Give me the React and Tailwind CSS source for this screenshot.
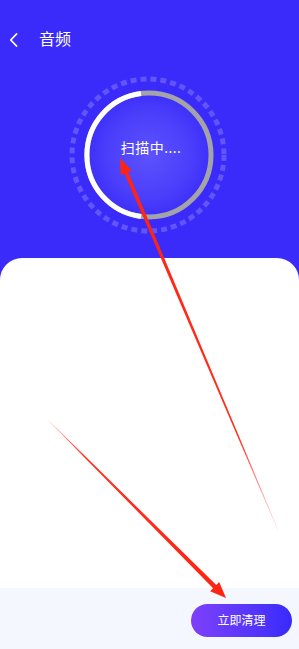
import React from "react";

const font = { fontFamily: '"Noto Sans", "Noto Sans CJK SC", sans-serif' };

function ScanRing() {
    // outer dashed ring + progress ring, drawn in a 160x160 box
    return (
        <svg width="160" height="160" viewBox="0 0 160 160" className="absolute inset-0">
            <defs>
                <radialGradient id="core" cx="50%" cy="50%" r="50%">
                    <stop offset="0%" stopColor="#5d52fd" />
                    <stop offset="70%" stopColor="#4a3efb" />
                    <stop offset="100%" stopColor="#3d2ffa" />
                </radialGradient>
            </defs>
            <circle cx="80" cy="80" r="76" fill="none" stroke="#ffffff" strokeOpacity="0.2" strokeWidth="5" strokeDasharray="6 4" />
            <circle cx="81" cy="80" r="62" fill="url(#core)" />
            <circle cx="81" cy="80" r="62" fill="none" stroke="#a3a3a8" strokeWidth="5" />
            <path d="M 73 18.5 A 62 62 0 0 0 73 141.5" fill="none" stroke="#ffffff" strokeWidth="5" />
        </svg>
    );
}

function Arrows() {
    return (
        <svg width="299" height="649" viewBox="0 0 299 649" className="absolute inset-0 pointer-events-none">
            <defs>
                <linearGradient id="a1" gradientUnits="userSpaceOnUse" x1="278" y1="530" x2="120" y2="158">
                    <stop offset="0%" stopColor="#ff2412" stopOpacity="0.1" />
                    <stop offset="25%" stopColor="#ff2412" stopOpacity="0.95" />
                    <stop offset="100%" stopColor="#ff2412" />
                </linearGradient>
                <linearGradient id="a2" gradientUnits="userSpaceOnUse" x1="48" y1="420" x2="226" y2="598">
                    <stop offset="0%" stopColor="#ff2412" stopOpacity="0.1" />
                    <stop offset="20%" stopColor="#ff2412" stopOpacity="0.95" />
                    <stop offset="100%" stopColor="#ff2412" />
                </linearGradient>
            </defs>
            <polygon
                fill="url(#a1)"
                points="278.3,529.9 128.1,171.9 131.8,170.4 120,158 120.8,175.1 124.5,173.5 277.7,530.1"
            />
            <polygon
                fill="url(#a2)"
                points="48.2,419.8 216.3,585.1 219.2,582.1 226,598 210.1,591.2 213.1,588.3 47.8,420.2"
            />
        </svg>
    );
}

export default function App() {
    return (
        <div className="relative w-[299px] h-[649px] overflow-hidden bg-[#3a2bfa] flex flex-col" style={font}>
            {/* header */}
            <div className="h-[75px] flex items-start pt-[29px]">
                <svg width="10" height="14" viewBox="0 0 10 14" className="ml-[9px] mt-[4px]">
                    <polyline points="7.5,1 1.8,7 7.5,13" fill="none" stroke="#fff" strokeWidth="1.8" strokeLinecap="round" strokeLinejoin="round" />
                </svg>
                <h1 className="ml-[20px] text-[16px] leading-[20px] text-white">音频</h1>
            </div>

            {/* scanning circle */}
            <div className="relative w-[160px] h-[160px] ml-[68px]">
                <ScanRing />
                <div className="absolute inset-0 flex items-center justify-center pl-[6px] pb-[16px]">
                    <span className="text-[14px] text-white tracking-[0.5px]">扫描中....</span>
                </div>
            </div>

            {/* result card */}
            <div className="mt-[23px] flex-1 bg-white rounded-t-[22px]"></div>

            {/* footer */}
            <div className="h-[61px] bg-[#f4f7fe] flex justify-end items-start pt-[16px] pr-[7px]">
                <button className="w-[101px] h-[33px] rounded-full bg-gradient-to-r from-[#7d3ffb] to-[#382afb] text-white text-[12px]">
                    立即清理
                </button>
            </div>

            <Arrows />
        </div>
    );
}
